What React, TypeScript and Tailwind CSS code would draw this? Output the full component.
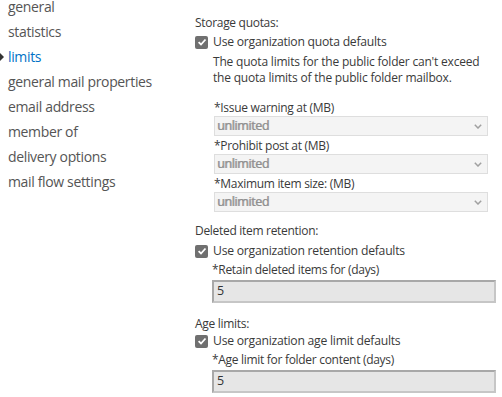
import React from "react";

const navItems = [
  "general",
  "statistics",
  "limits",
  "general mail properties",
  "email address",
  "member of",
  "delivery options",
  "mail flow settings",
];

function Check() {
  return (
    <span className="flex h-[13px] w-[13px] shrink-0 items-center justify-center rounded-[2px] bg-[#707070]">
      <svg width="10" height="10" viewBox="0 0 10 10">
        <path d="M1.6 5.2 L4 7.5 L8.5 2.5" fill="none" stroke="#ffffff" strokeWidth="1.8" />
      </svg>
    </span>
  );
}

function CheckRow({ label }: { label: string }) {
  return (
    <div className="flex h-[18px] items-center gap-[5px] text-[12.2px] tracking-[-0.25px]">
      <Check />
      <span className="leading-[20px]">{label}</span>
    </div>
  );
}

function Select({ label }: { label: string }) {
  return (
    <div className="flex flex-col">
      <div className="h-[18px] leading-[20px]">{label}</div>
      <div className="flex h-[20px] w-[274px] items-center justify-between border border-[#dedede] bg-[#f4f4f4] pl-[2px] pr-[5px]">
        <span className="text-[12.5px] tracking-[-0.4px] text-[#909090] [text-shadow:0.7px_0_0_#a8a8a8]">unlimited</span>
        <svg width="8" height="5" viewBox="0 0 8 5">
          <path d="M0.8 0.8 L4 4 L7.2 0.8" fill="none" stroke="#a0a0a0" strokeWidth="1.5" />
        </svg>
      </div>
    </div>
  );
}

function Field({ label, value }: { label: string; value: string }) {
  return (
    <div className="flex flex-col pl-[17px]">
      <div className="h-[18px] leading-[20px]">{label}</div>
      <div className="mt-[2px] flex h-[23px] w-[284px] items-center border-2 border-t-[#a8a8a8] border-l-[#a8a8a8] border-r-[#c6c6c6] border-b-[#c6c6c6] bg-[#e6e6e6] pl-[3px] text-[12.5px] text-[#333]">
        {value}
      </div>
    </div>
  );
}

export default function App() {
  return (
    <div
      className="flex h-[397px] w-[502px] overflow-hidden bg-white text-[#3a3a3a]"
      style={{ fontFamily: "'Open Sans', 'Noto Sans', sans-serif" }}
    >
      <div className="relative -mt-[6px] flex w-[195px] shrink-0 flex-col">
        {navItems.map((n) => (
          <div
            key={n}
            className={
              "relative h-[25px] pl-[8px] text-[14px] leading-[25px] tracking-[-0.35px] " +
              (n === "limits" ? "text-[#0072c6]" : "text-[#555]")
            }
          >
            {n === "limits" && (
              <span className="absolute left-0 top-[9px] h-0 w-0 border-y-[4px] border-l-[4px] border-y-transparent border-l-[#333]" />
            )}
            {n}
          </div>
        ))}
      </div>
      <div className="flex flex-col pt-[15px] text-[12px] tracking-[-0.3px]">
        <div className="h-[16px] leading-[16px]">Storage quotas:</div>
        <div className="mt-[2px]">
          <CheckRow label="Use organization quota defaults" />
        </div>
        <div className="mt-[3px] pl-[18px] leading-[16px] tracking-[-0.2px]">
          The quota limits for the public folder can't exceed
          <br />
          the quota limits of the public folder mailbox.
        </div>
        <div className="mt-[12px] flex flex-col pl-[19px]">
          <Select label="*Issue warning at (MB)" />
          <Select label="*Prohibit post at (MB)" />
          <Select label="*Maximum item size: (MB)" />
        </div>
        <div className="mt-[9px] h-[18px] leading-[20px]">Deleted item retention:</div>
        <div className="mt-[3px]">
          <CheckRow label="Use organization retention defaults" />
        </div>
        <Field label="*Retain deleted items for (days)" value="5" />
        <div className="mt-[11px] h-[18px] leading-[20px]">Age limits:</div>
        <CheckRow label="Use organization age limit defaults" />
        <Field label="*Age limit for folder content (days)" value="5" />
      </div>
    </div>
  );
}
